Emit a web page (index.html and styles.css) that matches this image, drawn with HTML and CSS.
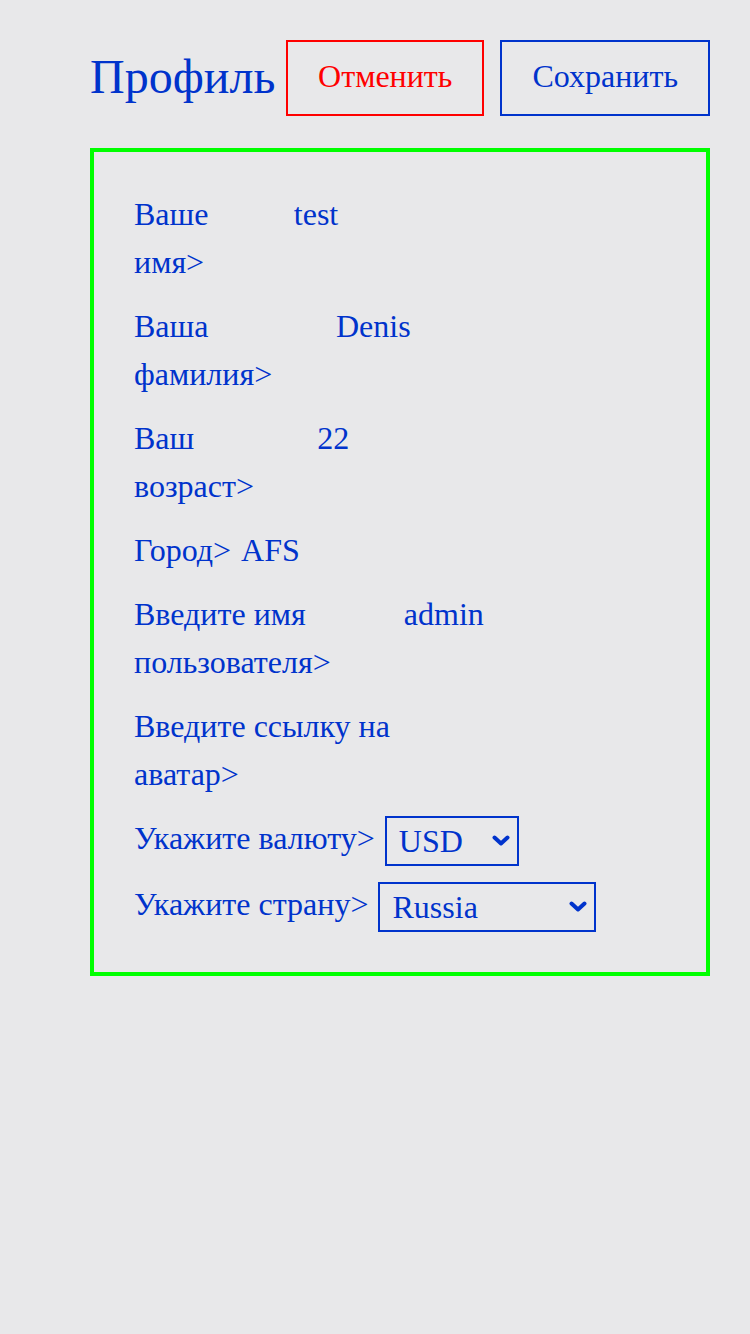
FILE: index.html
```html
<!DOCTYPE html>
<html lang="ru">
<head>
<meta charset="utf-8">
<title>Профиль</title>
<link rel="stylesheet" href="styles.css">
</head>
<body>
<div class="page">
  <header class="header">
    <h1 class="title">Профиль</h1>
    <div class="actions">
      <button class="btn btn-cancel" type="button">Отменить</button>
      <button class="btn btn-save" type="button">Сохранить</button>
    </div>
  </header>
  <form class="card">
    <div class="row">
      <label class="label" for="f-name">Ваше имя&gt;</label>
      <input class="field" id="f-name" type="text" value="test">
    </div>
    <div class="row">
      <label class="label" for="f-surname">Ваша фамилия&gt;</label>
      <input class="field" id="f-surname" type="text" value="Denis">
    </div>
    <div class="row">
      <label class="label" for="f-age">Ваш возраст&gt;</label>
      <input class="field" id="f-age" type="text" value="22">
    </div>
    <div class="row">
      <label class="label" for="f-city">Город&gt;</label>
      <input class="field" id="f-city" type="text" value="AFS">
    </div>
    <div class="row">
      <label class="label" for="f-user">Введите имя пользователя&gt;</label>
      <input class="field" id="f-user" type="text" value="admin">
    </div>
    <div class="row">
      <label class="label" for="f-avatar">Введите ссылку на аватар&gt;</label>
      <input class="field" id="f-avatar" type="text" value="">
    </div>
    <div class="row">
      <label class="label" for="f-currency">Укажите валюту&gt;</label>
      <span class="select-wrap">
        <select class="select select-currency" id="f-currency">
          <option>USD</option>
          <option>EUR</option>
          <option>RUB</option>
        </select>
        <svg class="chevron" width="18" height="12" viewBox="0 0 18 12" aria-hidden="true"><polyline points="2.5,2.5 9,8.5 15.5,2.5" fill="none" stroke="currentColor" stroke-width="4" stroke-linecap="round" stroke-linejoin="round"/></svg>
      </span>
    </div>
    <div class="row">
      <label class="label" for="f-country">Укажите страну&gt;</label>
      <span class="select-wrap">
        <select class="select select-country" id="f-country">
          <option>Russia</option>
          <option>Kazakhstan</option>
          <option>Armenia</option>
        </select>
        <svg class="chevron" width="18" height="12" viewBox="0 0 18 12" aria-hidden="true"><polyline points="2.5,2.5 9,8.5 15.5,2.5" fill="none" stroke="currentColor" stroke-width="4" stroke-linecap="round" stroke-linejoin="round"/></svg>
      </span>
    </div>
  </form>
</div>
</body>
</html>
```

FILE: styles.css
```css
html, body {
  margin: 0;
  padding: 0;
  background: #e8e8ea;
}

body {
  font-family: "Liberation Serif", "Times New Roman", serif;
  color: #0033cc;
  width: 750px;
  min-height: 1334px;
}

.page {
  padding: 40px 40px 0 90px;
}

.header {
  display: flex;
  align-items: center;
  justify-content: space-between;
  margin-bottom: 32px;
}

.title {
  margin: 0;
  padding-bottom: 2px;
  font-size: 48px;
  font-weight: normal;
  line-height: 52px;
  color: #0033cc;
}

.actions {
  display: flex;
  gap: 16px;
}

.btn {
  font-family: "Liberation Serif", "Times New Roman", serif;
  font-size: 32px;
  line-height: 32px;
  padding: 18px 30px 22px;
  background: transparent;
  border: 2px solid;
  border-radius: 0;
  cursor: pointer;
}

.btn-cancel {
  color: #ff0000;
  border-color: #ff0000;
}

.btn-save {
  color: #0033cc;
  border-color: #0033cc;
}

.card {
  border: 4px solid #00ff00;
  padding: 38px 40px 42px;
  display: flex;
  flex-direction: column;
  gap: 16px;
  margin: 0;
}

.row {
  display: flex;
  align-items: flex-start;
  gap: 8px;
}

.label {
  font-size: 32px;
  line-height: 48px;
  flex: 0 1 auto;
}

.field {
  font-family: "Liberation Serif", "Times New Roman", serif;
  font-size: 32px;
  line-height: 48px;
  height: 48px;
  color: #0033cc;
  background: transparent;
  border: none;
  outline: none;
  padding: 0 2px;
  margin: 0;
  width: 381px;
  min-width: 0;
  flex: 0 1 auto;
  box-sizing: border-box;
}

.select-wrap {
  position: relative;
  display: block;
  flex: 0 0 auto;
  margin: 2px 0 -2px 2px;
  color: #0033cc;
}

.select {
  display: block;
  -webkit-appearance: none;
  appearance: none;
  font-family: "Liberation Serif", "Times New Roman", serif;
  font-size: 32px;
  color: #0033cc;
  background: transparent;
  border: 2px solid #0033cc;
  border-radius: 0;
  height: 50px;
  padding: 0 30px 0 12px;
  margin: 0;
  box-sizing: border-box;
  outline: none;
}

.chevron {
  position: absolute;
  right: 9px;
  top: 19px;
  pointer-events: none;
}

.select-currency {
  width: 134px;
}

.select-country {
  width: 218px;
}
```
